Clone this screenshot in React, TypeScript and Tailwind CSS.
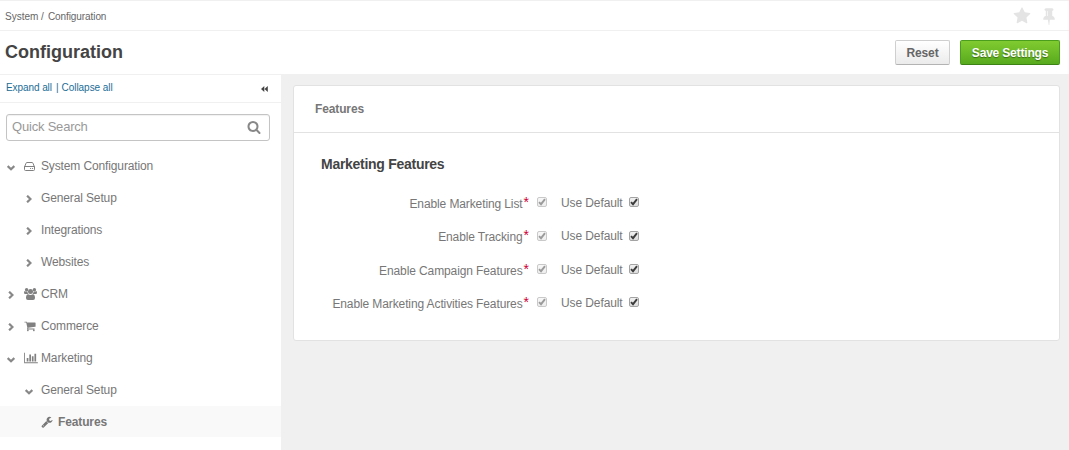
import React from "react";

type GlyphProps = { d: string; box?: string; className: string };

const Glyph = ({ d, box = "0 0 1792 1792", className }: GlyphProps) => (
  <svg viewBox={box} fill="currentColor" className={`block shrink-0 ${className}`} aria-hidden="true">
    <path d={d} />
  </svg>
);

const STAR =
  "M1728 647q0 22-26 48l-363 354 86 500q1 7 1 20 0 21-10.5 35.5t-30.5 14.5q-19 0-40-12l-449-236-449 236q-22 12-40 12-21 0-31.5-14.5t-10.5-35.5q0-6 2-20l86-500-364-354q-25-27-25-48 0-37 56-46l502-73 225-455q19-41 49-41t49 41l225 455 502 73q56 9 56 46z";
const PIN =
  "M800 864v-448q0-14-9-23t-23-9-23 9-9 23v448q0 14 9 23t23 9 23-9 9-23zm672 352q0 26-19 45t-45 19h-429l-51 483q-2 12-10.5 20.5t-20.5 8.5h-1q-27 0-32-27l-76-485h-404q-26 0-45-19t-19-45q0-123 78.5-221.5t177.5-98.5v-512q-52 0-90-38t-38-90 38-90 90-38h640q52 0 90 38t38 90-38 90-90 38v512q99 0 177.5 98.5t78.5 221.5z";
const SEARCH =
  "M1216 832q0-185-131.5-316.5t-316.5-131.5-316.5 131.5-131.5 316.5 131.5 316.5 316.5 131.5 316.5-131.5 131.5-316.5zm512 832q0 52-38 90t-90 38q-54 0-90-38l-343-342q-179 124-399 124-143 0-273.5-55.5t-225-150-150-225-55.5-273.5 55.5-273.5 150-225 225-150 273.5-55.5 273.5 55.5 225 150 150 225 55.5 273.5q0 220-124 399l343 343q37 37 37 90z";
const BARS =
  "M640 896v512h-256v-512h256zm384-512v1024h-256v-1024h256zm1024 1152v128h-2048v-1536h128v1408h1920zm-640-896v768h-256v-768h256zm384-384v1152h-256v-1152h256z";
const CART =
  "M704 1536q0 52-38 90t-90 38-90-38-38-90 38-90 90-38 90 38 38 90zm896 0q0 52-38 90t-90 38-90-38-38-90 38-90 90-38 90 38 38 90zm128-1088v512q0 24-16.5 42.5t-40.5 21.5l-1044 122q13 60 13 70 0 16-24 64h920q26 0 45 19t19 45-19 45-45 19h-1024q-26 0-45-19t-19-45q0-11 8-31.5t16-36 21.5-40 15.5-29.5l-177-823h-204q-26 0-45-19t-19-45 19-45 45-19h256q16 0 28.5 6.5t19.5 15.5 13 24.5 8 26 5.5 29.5 4.5 26h1201q26 0 45 19t19 45z";
const WRENCH =
  "M448 1472q0-26-19-45t-45-19-45 19-19 45 19 45 45 19 45-19 19-45zm644-420l-682 682q-37 37-90 37-52 0-91-37l-106-108q-38-36-38-90 0-53 38-91l681-681q39 98 114.5 173.5t173.5 114.5zm634-435q0 39-23 106-47 134-164.5 217.5t-258.5 83.5q-185 0-316.5-131.5t-131.5-316.5 131.5-316.5 316.5-131.5q58 0 121.5 16.5t107.5 46.5q16 11 16 28t-16 28l-293 169v224l193 107q5-3 79-48.5t135.5-81 70.5-35.5q15 0 23.5 10t8.500 25z";

const Users = () => (
  <svg viewBox="0 0 13 12" fill="currentColor" className="block h-3 w-[13px] shrink-0" aria-hidden="true">
    <circle cx="2.6" cy="1.8" r="1.7" />
    <circle cx="10.4" cy="1.8" r="1.7" />
    <circle cx="6.5" cy="3.5" r="2.5" />
    <path d="M3.9 5.9H1.3Q0 5.9 0 4.9 0 2.9.8 2.9 1.7 3.9 3.5 3.5 3.4 5 4.3 5.9zM9.1 5.9h2.6q1.300 0 1.300-1 0-2-.8-2-.9 1-2.700.6.1 1.500-.8 2.400zM4.100 6.200Q6.500 7.800 8.900 6.200 11 6.200 11 10q0 2-1.900 2H3.900Q2 12 2 10 2 6.200 4.100 6.200z" />
  </svg>
);

const Drive = () => (
  <svg viewBox="0 0 11 9" fill="none" stroke="currentColor" className="block h-[9px] w-[11px] shrink-0" aria-hidden="true">
    <path d="M.5 5 2 1.300Q2.200.5 3 .5h5q.8 0 1 .8L10.500 5v2.500q0 1-1 1h-8q-1 0-1-1V4.500H10.500" />
    <path d="M6.100 6.500h1M8.100 6.500h1" />
  </svg>
);

const Chevron = ({ open }: { open?: boolean }) =>
  open ? (
    <svg viewBox="0 0 8 6" fill="none" stroke="currentColor" strokeWidth="2.200" className="mt-[3px] block h-1.5 w-2 text-[#888888]" aria-hidden="true">
      <path d="M.7 1.100 4 4.200 7.300 1.100" />
    </svg>
  ) : (
    <svg viewBox="0 0 6 8" fill="none" stroke="currentColor" strokeWidth="2.200" className="mt-px ml-px block h-2 w-1.5 text-[#888888]" aria-hidden="true">
      <path d="M1.100.7 4.500 4 1.100 7.300" />
    </svg>
  );

type Item = { label: string; level: number; open?: boolean; icon?: React.ReactNode };

const items: Item[] = [
  { label: "System Configuration", level: 0, open: true, icon: <Drive /> },
  { label: "General Setup", level: 1 },
  { label: "Integrations", level: 1 },
  { label: "Websites", level: 1 },
  { label: "CRM", level: 0, icon: <Users /> },
  { label: "Commerce", level: 0, icon: <Glyph d={CART} className="h-3 w-3" /> },
  {
    label: "Marketing",
    level: 0,
    open: true,
    icon: <Glyph d={BARS} box="0 0 2048 1792" className="h-3 w-[14px]" />,
  },
  { label: "General Setup", level: 1, open: true },
];

const TreeRow = ({ label, level, open, icon }: Item) => (
  <li className={`flex h-8 items-center tracking-[-0.13px] ${level ? "pl-[25px]" : "pl-[7px]"}`}>
    <span className={`flex justify-start ${level ? "w-4" : "w-[17px]"}`}>
      <Chevron open={open} />
    </span>
    {level === 0 && <span className="flex w-[17px] text-[#808080]">{icon}</span>}
    <span>{label}</span>
  </li>
);

const Check = ({ disabled, label }: { disabled?: boolean; label: string }) => (
  <span
    role="checkbox"
    aria-checked="true"
    aria-disabled={disabled ? "true" : "false"}
    aria-label={label}
    className={`-mt-px block h-[10px] w-[10px] shrink-0 rounded-[2px] border bg-linear-to-b ${
      disabled ? "border-[#c9c9c9] from-[#f7f7f7] to-[#eeeeee] text-[#9b9b9b]" : "border-[#a3a3a3] from-[#f1f1f1] to-[#dddddd] text-[#3c3c3c]"
    }`}
  >
    <svg viewBox="0 0 8 8" fill="none" stroke="currentColor" strokeWidth="1.900" className="block h-2 w-2" aria-hidden="true">
      <path d="M1 4.200 3 6.200 7 1.100" />
    </svg>
  </span>
);

const settings = [
  { label: "Enable Marketing List", height: "h-[33px]" },
  { label: "Enable Tracking", height: "h-[34px]" },
  { label: "Enable Campaign Features", height: "h-[33px]" },
  { label: "Enable Marketing Activities Features", height: "h-[33px]" },
];

export default function App() {
  return (
    <div className="flex h-[450px] w-[1069px] flex-col overflow-hidden bg-white font-['Liberation_Sans',Arial,sans-serif] text-xs text-[#777777]">
      <nav className="flex h-[31px] shrink-0 items-center justify-between border-t border-b border-[#f0f0f0] pr-[11px] pl-[5px]">
        <div className="pt-[3px] text-[10px] text-[#666666]">
          System /<span className="ml-[4px] tracking-[-0.08px]">Configuration</span>
        </div>
        <div className="flex items-center gap-[9px] text-[#e4e4e4]">
          <Glyph d={STAR} className="h-[18px] w-[18px]" />
          <Glyph d={PIN} className="h-[18px] w-[18px]" />
        </div>
      </nav>

      <header className="flex h-11 shrink-0 items-center justify-between border-b border-[#f0f0f0] pr-[9px] pl-[5px]">
        <h1 className="pb-0.5 text-lg font-bold text-[#444444]">Configuration</h1>
        <div className="flex gap-[10px] font-bold">
          <button className="h-[25px] w-[55px] rounded-[2px] border border-[#cfcfcf] border-b-[#b3b3b3] bg-linear-to-b from-white to-[#ebebeb] tracking-[-0.1px] text-[#666666]">
            Reset
          </button>
          <button className="h-[25px] w-[100px] rounded-[2px] border border-[#4a9e1b] border-b-[#3c8214] bg-linear-to-b from-[#80cb30] to-[#58aa1e] tracking-[-0.18px] text-white [text-shadow:0_1px_1px_rgba(0,0,0,0.4)]">
            Save Settings
          </button>
        </div>
      </header>

      <div className="flex min-h-0 flex-1">
        <aside className="flex w-[281px] shrink-0 flex-col bg-white">
          <div className="flex h-7 shrink-0 items-center justify-between border-b border-[#f0f0f0] pr-[13px] pl-1.5 text-[10px] text-[#1b6d96]">
            <div className="flex pb-px">
              <a className="tracking-[-0.08px]">Expand all</a>
              <span className="mr-[3px] ml-1">|</span>
              <a className="tracking-[-0.04px]">Collapse all</a>
            </div>
            <svg viewBox="0 0 7 6" fill="#444444" className="block h-1.5 w-[7px]" aria-hidden="true">
              <path d="M0 3 3.300 0V6zM3.500 3 6.800 0V6z" />
            </svg>
          </div>
          <div className="mt-[11px] ml-1.5 flex h-[27px] w-[264px] shrink-0 items-center justify-between rounded-[3px] border border-[#c4c4c4] pr-[8px] pl-[5px] text-[13px] text-[#999999] shadow-[inset_0_1px_1px_rgba(0,0,0,0.06)]">
            <span className="pb-px tracking-[-0.2px]">Quick Search</span>
            <Glyph d={SEARCH} className="mb-px h-[14px] w-[14px] text-[#888888]" />
          </div>
          <ul className="mt-[9px]">
            {items.map((item, index) => (
              <TreeRow key={index} {...item} />
            ))}
            <li className="flex h-[31px] items-center gap-[5px] bg-[#f9f9f9] pl-[41px] font-bold tracking-[-0.13px]">
              <Glyph d={WRENCH} className="h-3 w-3" />
              Features
            </li>
          </ul>
        </aside>

        <main className="flex-1 bg-[#f0f0f0] pt-[10px] pr-[9px] pl-3">
          <section className="h-[256px] rounded-[3px] border border-[#e2e2e2] bg-white">
            <div className="flex h-[47px] items-center border-b border-[#e2e2e2] pl-[21px] font-bold tracking-[-0.13px]">Features</div>
            <div className="pl-[27px]">
              <h2 className="pt-[21px] text-sm font-bold tracking-[-0.28px] text-[#444444]">Marketing Features</h2>
              <div className="mt-[12px]">
                {settings.map(({ label, height }) => (
                  <div key={label} className={`flex items-center ${height}`}>
                    <div className="flex w-[208px] justify-end pt-0.5">
                      <span className="tracking-[-0.11px]">{label}</span>
                      <span className="-mt-0.5 ml-px h-4 text-sm leading-4 text-[#cc0033]">*</span>
                    </div>
                    <div className="ml-2 flex w-[24px]">
                      <Check disabled label={label} />
                    </div>
                    <span className="w-[68px] tracking-[-0.1px]">Use Default</span>
                    <Check label="Use Default" />
                  </div>
                ))}
              </div>
            </div>
          </section>
        </main>
      </div>
    </div>
  );
}
